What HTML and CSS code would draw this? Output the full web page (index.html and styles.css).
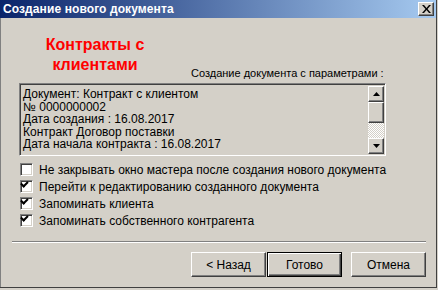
FILE: index.html
```html
<!DOCTYPE html>
<html lang="ru">
<head>
  <meta charset="UTF-8" />
  <title>Создание нового документа</title>
  <link rel="stylesheet" href="styles.css">
</head>
<body>
  <div class="window">
    <div class="titlebar">
      <span class="title">Создание нового документа</span>
      <div class="close-btn">
        <svg width="9" height="8" viewBox="0 0 9 8"><path d="M0 0h2l2.5 3 2.5-3h2L5.5 4 9 8H7L4.5 5 2 8H0l3.5-4z" fill="#000"/></svg>
      </div>
    </div>

    <div class="content">
      <div class="header-row">
        <div class="heading">Контракты с<br>клиентами</div>
        <div class="params-label">Создание документа с параметрами :</div>
      </div>

      <div class="memo">
        <div class="memo-text">
          <div>Документ: Контракт с клиентом</div>
          <div>№ 0000000002</div>
          <div>Дата создания : 16.08.2017</div>
          <div>Контракт Договор поставки</div>
          <div>Дата начала контракта : 16.08.2017</div>
        </div>
        <div class="scrollbar">
          <div class="sb-btn"><svg width="7" height="4" viewBox="0 0 7 4"><path d="M3.5 0L7 4H0z" fill="#000"/></svg></div>
          <div class="sb-thumb"></div>
          <div class="sb-track"></div>
          <div class="sb-btn"><svg width="7" height="4" viewBox="0 0 7 4"><path d="M0 0h7L3.5 4z" fill="#000"/></svg></div>
        </div>
      </div>

      <div class="options">
        <label class="opt"><span class="box"></span>Не закрывать окно мастера после создания нового документа</label>
        <label class="opt"><span class="box checked"></span>Перейти к редактированию созданного документа</label>
        <label class="opt"><span class="box checked"></span>Запоминать клиента</label>
        <label class="opt"><span class="box checked"></span>Запоминать собственного контрагента</label>
      </div>
    </div>

    <div class="separator"></div>

    <div class="buttons">
      <div class="btn">&lt; Назад</div>
      <div class="btn default">Готово</div>
      <div class="btn cancel">Отмена</div>
    </div>
  </div>
</body>
</html>
```

FILE: styles.css
```css
body {
  margin: 0;
  background: #d4d0c8;
  font-family: "Liberation Sans", Arial, sans-serif;
  font-size: 12px;
  color: #000;
}
.window {
  width: 436px;
  height: 287px;
  background: #d4d0c8;
  border-right: 1px solid #404040;
  border-bottom: 1px solid #404040;
  box-shadow: 1px 1px 0 #808080 inset;
  position: relative;
}
.titlebar {
  height: 18px;
  display: flex;
  align-items: center;
  justify-content: space-between;
  padding: 0 2px 0 3px;
  background: linear-gradient(to right, #0a246a, #a6caf0);
}
.title {
  color: #fff;
  font-weight: bold;
  font-size: 12px;
  letter-spacing: 0.1px;
}
.close-btn {
  box-sizing: border-box;
  width: 16px;
  height: 14px;
  background: #d4d0c8;
  border-top: 1px solid #fff;
  border-left: 1px solid #fff;
  border-right: 1px solid #404040;
  border-bottom: 1px solid #404040;
  box-shadow: inset -1px -1px 0 #808080;
  display: flex;
  align-items: center;
  justify-content: center;
}
.content {
  padding: 0 0 0 19px;
}
.header-row {
  display: flex;
  align-items: flex-end;
  height: 65px;
}
.heading {
  width: 152px;
  text-align: center;
  color: #ff0000;
  font-weight: bold;
  font-size: 16px;
  line-height: 20px;
  padding-bottom: 8px;
}
.params-label {
  margin-left: 20px;
  padding-bottom: 4px;
  font-size: 11px;
}
.memo {
  width: 362px;
  height: 68px;
  display: flex;
  border-top: 1px solid #808080;
  border-left: 1px solid #808080;
  border-right: 1px solid #fff;
  border-bottom: 1px solid #fff;
  box-shadow: inset 1px 1px 0 #404040;
  padding: 2px 1px 1px 2px;
}
.memo-text {
  flex: 1;
  overflow: hidden;
  line-height: 12.5px;
  padding: 2px 0 0 1px;
}
.scrollbar {
  width: 16px;
  display: flex;
  flex-direction: column;
}
.sb-btn,
.sb-thumb {
  box-sizing: border-box;
  background: #d4d0c8;
  border-top: 1px solid #fff;
  border-left: 1px solid #fff;
  border-right: 1px solid #404040;
  border-bottom: 1px solid #404040;
  box-shadow: inset -1px -1px 0 #808080;
}
.sb-btn {
  height: 16px;
  display: flex;
  align-items: center;
  justify-content: center;
}
.sb-thumb {
  height: 21px;
}
.sb-track {
  flex: 1;
  background-color: #e8e6e2;
  background-image: repeating-conic-gradient(#d4d0c8 0 25%, #fff 0 50%);
  background-size: 2px 2px;
}
.options {
  margin-top: 7px;
  display: flex;
  flex-direction: column;
  gap: 4px;
}
.opt {
  display: flex;
  align-items: center;
  height: 13px;
  white-space: nowrap;
}
.box {
  box-sizing: border-box;
  width: 13px;
  height: 13px;
  margin: 0 6px 0 1px;
  background: #fff;
  border-top: 1px solid #808080;
  border-left: 1px solid #808080;
  border-right: 1px solid #fff;
  border-bottom: 1px solid #fff;
  box-shadow: inset 1px 1px 0 #404040, inset -1px -1px 0 #d4d0c8;
  position: relative;
}
.box.checked::after {
  content: "";
  position: absolute;
  left: 2px;
  top: 1px;
  width: 5px;
  height: 3px;
  border-left: 2px solid #000;
  border-bottom: 2px solid #000;
  transform: rotate(-45deg) translate(0, 1px);
  transform-origin: left bottom;
}
.separator {
  margin: 0 10px 0 12px;
  height: 0;
  border-top: 1px solid #808080;
  border-bottom: 1px solid #fff;
  position: absolute;
  left: 0;
  right: 0;
  top: 241px;
}
.buttons {
  position: absolute;
  top: 252px;
  right: 10px;
  display: flex;
}
.btn {
  box-sizing: border-box;
  width: 75px;
  height: 25px;
  display: flex;
  align-items: center;
  justify-content: center;
  border-top: 1px solid #fff;
  border-left: 1px solid #fff;
  border-right: 1px solid #404040;
  border-bottom: 1px solid #404040;
  box-shadow: inset -1px -1px 0 #808080;
}
.btn.default {
  border: 1px solid #000;
  box-shadow: inset 1px 1px 0 #fff, inset -1px -1px 0 #404040, inset -2px -2px 0 #808080;
  margin-left: 1px;
}
.btn.cancel {
  margin-left: 9px;
}
```
